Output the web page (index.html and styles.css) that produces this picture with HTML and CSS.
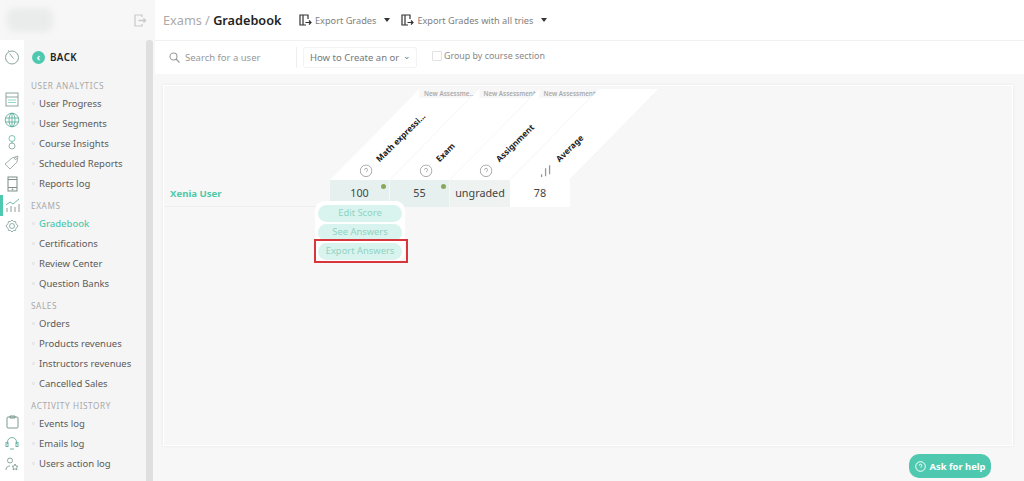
FILE: index.html
```html
<!DOCTYPE html>
<html lang="en">
<head>
  <meta charset="UTF-8">
  <meta name="viewport" content="width=device-width, initial-scale=1.0">
  <title>Gradebook</title>
  <link rel="stylesheet" href="styles.css">
</head>
<body>
  <aside class="side">
    <div class="side-top">
      <div class="logo"></div>
      <svg class="logout" width="13" height="13" viewBox="0 0 13 13" fill="none" stroke="#c9c9c9" stroke-width="1.2">
        <path d="M8 3V1H1v11h7v-2"/>
        <path d="M4.500 6.500h7M9.500 4.500l2 2-2 2" stroke-width="1.4"/>
      </svg>
    </div>
    <div class="side-body">
      <div class="rail">
        <svg class="rail-first" width="16" height="16" viewBox="0 0 16 16" fill="none" stroke="#7f9a92" stroke-width="0.9">
          <circle cx="8" cy="8.500" r="6.500"/><path d="M4 1.500l1.500 1M5.500 4.500l4 5"/>
        </svg>
        <svg class="rail-gap" width="14" height="15" viewBox="0 0 14 15" fill="none" stroke="#8fa6a0" stroke-width="1">
          <rect x="1" y="1" width="12" height="13"/><path d="M1 5h12"/><path d="M3 8h8M3 10.500h8" stroke="#8fd8c8"/>
        </svg>
        <svg width="16" height="16" viewBox="0 0 16 16" fill="none" stroke="#5fae9d" stroke-width="0.9">
          <circle cx="8" cy="8" r="6.800"/><ellipse cx="8" cy="8" rx="3" ry="6.800"/><path d="M1.500 6h13M1.500 10h13M8 1v14"/>
        </svg>
        <svg width="14" height="16" viewBox="0 0 14 16" fill="none" stroke="#6fbcab" stroke-width="0.9">
          <circle cx="7" cy="4.500" r="3"/><path d="M7 7.500v2"/><circle cx="7" cy="12" r="3" stroke="#8fa6a0"/>
        </svg>
        <svg width="16" height="15" viewBox="0 0 16 15" fill="none" stroke="#9aa8a4" stroke-width="0.9">
          <path d="M1 9l7-6 6-2-1 6-7 7z"/><circle cx="11.500" cy="3.500" r="1"/>
        </svg>
        <svg width="11" height="16" viewBox="0 0 11 16" fill="none" stroke="#7f8d89" stroke-width="1">
          <rect x="1" y="1" width="9" height="14"/><path d="M1 3.500h9M1 11.500h9"/><circle cx="5.500" cy="13.300" r="0.500"/>
        </svg>
        <div class="rail-active">
          <svg width="15" height="15" viewBox="0 0 15 15" fill="none" stroke="#8f9d99" stroke-width="1">
            <path d="M1 7l4-3 3 2 6-5" stroke="#6fbcab"/><path d="M2 14v-4M6 14V8M10 14V9M14 14V6"/>
          </svg>
        </div>
        <svg width="14" height="14" viewBox="0 0 14 14" fill="none" stroke="#86a8a0" stroke-width="0.9">
          <path d="M7 1l1.500 1.500h2l.5 2L13 7l-2 2.500-.5 2h-2L7 13l-1.500-1.500h-2l-.5-2L1 7l2-2.500.5-2h2z"/><circle cx="7" cy="7" r="2.500"/>
        </svg>
        <div class="rail-bottom">
          <svg width="13" height="14" viewBox="0 0 13 14" fill="none" stroke="#7f9a92" stroke-width="1">
            <rect x="1" y="2" width="11" height="11" rx="1"/><path d="M4 1h5v2H4z"/>
          </svg>
          <svg width="14" height="14" viewBox="0 0 14 14" fill="none" stroke="#6fb5a6" stroke-width="1">
            <path d="M2.500 8V6a4.500 4.500 0 0 1 9 0v2"/><rect x="1" y="6.500" width="2" height="4"/><rect x="11" y="6.500" width="2" height="4"/><path d="M5 13h4"/>
          </svg>
          <svg width="14" height="14" viewBox="0 0 14 14" fill="none" stroke="#7f9a92" stroke-width="0.9">
            <circle cx="5" cy="3.500" r="2.500"/><path d="M1 13c0-3 2-4 4-4"/><path d="M10 7l1 2 2 .3-1.500 1.400.4 2.100-1.900-1-1.900 1 .4-2.100L7 9.300 9 9z"/>
          </svg>
        </div>
      </div>
      <nav class="nav">
        <div class="back"><span class="back-dot">‹</span>BACK</div>
        <div class="nav-title">USER ANALYTICS</div>
        <a class="nav-item">User Progress</a>
        <a class="nav-item">User Segments</a>
        <a class="nav-item">Course Insights</a>
        <a class="nav-item">Scheduled Reports</a>
        <a class="nav-item">Reports log</a>
        <div class="nav-title">EXAMS</div>
        <a class="nav-item current">Gradebook</a>
        <a class="nav-item">Certifications</a>
        <a class="nav-item">Review Center</a>
        <a class="nav-item">Question Banks</a>
        <div class="nav-title">SALES</div>
        <a class="nav-item">Orders</a>
        <a class="nav-item">Products revenues</a>
        <a class="nav-item">Instructors revenues</a>
        <a class="nav-item">Cancelled Sales</a>
        <div class="nav-title">ACTIVITY HISTORY</div>
        <a class="nav-item">Events log</a>
        <a class="nav-item">Emails log</a>
        <a class="nav-item">Users action log</a>
      </nav>
      <div class="scrollbar"></div>
    </div>
  </aside>

  <main class="main">
    <header class="topbar">
      <h1 class="crumbs"><span class="crumb-dim">Exams / </span>Gradebook</h1>
      <div class="export">
        <svg width="13" height="12" viewBox="0 0 13 12" fill="none" stroke="#333" stroke-width="1.200"><path d="M9 5V1H1v10h6M4 1v10"/><path d="M6.500 8.500H12M10 6.500l2 2-2 2"/></svg>
        Export Grades<span class="caret"></span>
      </div>
      <div class="export">
        <svg width="13" height="12" viewBox="0 0 13 12" fill="none" stroke="#333" stroke-width="1.200"><path d="M9 5V1H1v10h6M4 1v10"/><path d="M6.500 8.500H12M10 6.500l2 2-2 2"/></svg>
        Export Grades with all tries<span class="caret"></span>
      </div>
    </header>

    <div class="filters">
      <div class="search">
        <svg width="11" height="11" viewBox="0 0 11 11" fill="none" stroke="#9a9a9a" stroke-width="1.100"><circle cx="4.500" cy="4.500" r="3.500"/><path d="M7 7l3.500 3.500"/></svg>
        Search for a user
      </div>
      <div class="course-select"><span class="course-name">How to Create an or</span><span class="chev">⌄</span></div>
      <label class="group-check"><span class="box"></span>Group by course section</label>
    </div>

    <section class="panel">
      <div class="grade-head">
        <div class="col-head"><span class="assess">New Assessme...</span><span class="col-title"><svg class="q" width="13" height="13" viewBox="0 0 13 13" fill="none" stroke="#aaa"><circle cx="6.500" cy="6.500" r="5.800"/><path d="M5 5.500a1.500 1.500 0 1 1 2 1.400v1"/></svg><b>Math expressi...</b></span></div>
        <div class="col-head"><span class="assess">New Assessment</span><span class="col-title"><svg class="q" width="13" height="13" viewBox="0 0 13 13" fill="none" stroke="#aaa"><circle cx="6.500" cy="6.500" r="5.800"/><path d="M5 5.500a1.500 1.500 0 1 1 2 1.400v1"/></svg><b>Exam</b></span></div>
        <div class="col-head"><span class="assess">New Assessment</span><span class="col-title"><svg class="q" width="13" height="13" viewBox="0 0 13 13" fill="none" stroke="#aaa"><circle cx="6.500" cy="6.500" r="5.800"/><path d="M5 5.500a1.500 1.500 0 1 1 2 1.400v1"/></svg><b>Assignment</b></span></div>
        <div class="col-head"><span class="col-title"><svg class="q" width="13" height="13" viewBox="0 0 13 13" fill="none" stroke="#999" stroke-width="1.300"><path d="M2 13v-3M6 12V4M10 10V1"/></svg><b>Average</b></span></div>
        <div class="col-head tail"></div>
      </div>
      <div class="grade-row">
        <div class="student">Xenia User</div>
        <div class="cell tinted">100<i class="dot"></i>
          <div class="menu">
            <span class="menu-btn">Edit Score</span>
            <span class="menu-btn">See Answers</span>
            <span class="menu-btn marked">Export Answers</span>
          </div>
        </div>
        <div class="cell tinted">55<i class="dot"></i></div>
        <div class="cell pale">ungraded</div>
        <div class="cell plain">78</div>
      </div>
    </section>

    <div class="help">
      <svg width="11" height="11" viewBox="0 0 11 11" fill="none" stroke="#fff"><circle cx="5.500" cy="5.500" r="4.800"/><path d="M4.200 4.500a1.300 1.300 0 1 1 1.800 1.200v1"/></svg>
      Ask for help
    </div>
  </main>
</body>
</html>
```

FILE: styles.css
```css
/* page */
html, body {
  height: 100%;
}

body {
  margin: 0;
  display: flex;
  height: 481px;
  overflow: hidden;
  font-family: 'Noto Sans', 'Liberation Sans', sans-serif;
  background-color: #f7f7f7;
  color: #555;
}

/* left side */
.side {
  width: 155px;
  flex-shrink: 0;
  display: flex;
  flex-direction: column;
  background-color: #f7f7f7;
}

.side-top {
  height: 40px;
  flex-shrink: 0;
  display: flex;
  align-items: center;
  justify-content: space-between;
  padding-right: 8px;
  box-sizing: border-box;
}

.logo {
  width: 46px;
  height: 24px;
  margin-left: 7px;
  background-color: #e9ecea;
  border-radius: 8px;
  filter: blur(3px);
}

.side-body {
  flex: 1;
  display: flex;
}

.rail {
  width: 24px;
  background-color: #fff;
  display: flex;
  flex-direction: column;
  align-items: center;
  flex-shrink: 0;
  position: relative;
  padding-top: 9px;
  box-sizing: border-box;
}

.rail svg {
  display: block;
  margin-bottom: 5.500px;
}

.rail .rail-gap {
  margin-top: 21px;
}

.rail-active {
  width: 24px;
  height: 21px;
  margin-top: -2px;
  margin-bottom: 3px;
  display: flex;
  justify-content: center;
  align-items: center;
  border-left: 3px solid #4ec9b0;
  box-sizing: border-box;
}

.rail-active svg {
  margin: 0 3px 0 0;
}

.rail-bottom {
  margin-top: auto;
  padding-bottom: 3px;
  display: flex;
  flex-direction: column;
  align-items: center;
}

.rail-bottom svg {
  margin-bottom: 7px;
}

.nav {
  width: 122px;
  flex-shrink: 0;
  background-color: #f5f5f5;
  padding: 8px 0 0 7px;
  box-sizing: border-box;
}

.back {
  display: flex;
  align-items: center;
  height: 18px;
  font-size: 9.800px;
  font-weight: 600;
  color: #222;
  letter-spacing: 0.4px;
  margin-bottom: 12px;
}

.back-dot {
  width: 13px;
  height: 13px;
  margin: 0 5px 0 1px;
  border-radius: 50%;
  background-color: #4ec9b0;
  color: #fff;
  font-size: 11px;
  line-height: 11px;
  text-align: center;
}

.nav-title {
  height: 16px;
  line-height: 16px;
  margin-top: 4px;
  font-size: 8.200px;
  color: #a8a8a8;
  letter-spacing: 0.6px;
}

.nav-item {
  display: block;
  height: 20px;
  line-height: 20px;
  font-size: 9.500px;
  color: #5a5a5a;
  padding-left: 8px;
  position: relative;
}

.nav-item::before {
  content: "";
  position: absolute;
  left: 1px;
  top: 8px;
  width: 3px;
  height: 3px;
  border: 1px solid #ddd;
  border-radius: 50%;
  box-sizing: border-box;
}

.nav-item.current {
  color: #4ec9b0;
  font-weight: 500;
}

.scrollbar {
  width: 7px;
  background-color: #dfdfdf;
  border-radius: 3px 3px 0 0;
  flex-shrink: 0;
}

/* main part */
.main {
  flex: 1;
  min-width: 0;
  position: relative;
}

.topbar {
  height: 41px;
  box-sizing: border-box;
  background-color: #fff;
  border-bottom: 1px solid #f0f0f0;
  display: flex;
  align-items: center;
  padding-left: 8px;
}

.crumbs {
  width: 118px;
  white-space: nowrap;
  margin: 0 18px 0 0;
  font-size: 12.700px;
  font-weight: 600;
  color: #222;
}

.crumb-dim {
  font-weight: 400;
  color: #aaa;
}

.export {
  display: flex;
  align-items: center;
  gap: 3px;
  font-size: 9.200px;
  color: #808080;
  margin-right: 11px;
}

.caret {
  width: 0;
  height: 0;
  margin-left: 5px;
  border-left: 3px solid transparent;
  border-right: 3px solid transparent;
  border-top: 4px solid #333;
}

.filters {
  height: 33px;
  box-sizing: border-box;
  background-color: #fff;
  display: flex;
  align-items: center;
  padding: 0 0 0 5px;
}

.search {
  width: 137px;
  height: 21px;
  box-sizing: border-box;
  padding-left: 9px;
  display: flex;
  align-items: center;
  gap: 5px;
  font-size: 9.500px;
  color: #999;
  border-right: 1px solid #eee;
  margin-right: 6px;
}

.course-select {
  width: 114px;
  height: 21px;
  box-sizing: border-box;
  padding-left: 6px;
  display: flex;
  align-items: center;
  font-size: 9.500px;
  color: #777;
  border: 1px solid #f3f3f3;
  border-radius: 3px;
}

.course-name {
  width: 93px;
  white-space: nowrap;
}

.chev {
  font-size: 9px;
  line-height: 9px;
  margin-top: -4px;
}

.group-check {
  display: flex;
  align-items: center;
  margin: -4px 0 0 15px;
  font-size: 8.900px;
  color: #888;
}

.box {
  width: 10px;
  height: 10px;
  margin-right: 2px;
  border: 1px solid #e2e2e2;
  border-radius: 1px;
  box-sizing: border-box;
}

.panel {
  width: 850px;
  height: 361px;
  margin: 11px 0 0 8px;
  box-sizing: border-box;
  background-color: #f7f7f7;
  border: 1px solid #fff;
  box-shadow: 0 0 2px #e5e5e5;
  padding-top: 3px;
}

/* slanted column heads */
.grade-head {
  display: flex;
  height: 91px;
  margin-left: 166px;
  overflow: visible;
}

.col-head {
  width: 60px;
  height: 91px;
  flex-shrink: 0;
  position: relative;
  background-color: #fff;
  transform: skewX(-44.500deg);
  transform-origin: bottom left;
  border-right: 1px solid #f3f3f3;
  box-sizing: border-box;
}

.col-head.tail {
  width: 0;
}

.assess {
  position: absolute;
  top: 0;
  left: 0;
  width: 60px;
  font-size: 6.300px;
  font-weight: 600;
  color: #aaa;
  text-align: center;
  white-space: nowrap;
  transform: skewX(44.500deg);
  transform-origin: top left;
  background-color: #f7f7f7;
  height: 9px;
  line-height: 9px;
}

.col-title {
  position: absolute;
  left: 36px;
  bottom: 0;
  display: flex;
  align-items: center;
  gap: 9px;
  white-space: nowrap;
  transform: skewX(44.500deg) rotate(-44.500deg);
  transform-origin: left bottom;
}

.col-title b {
  font-size: 8.300px;
  font-weight: 700;
  color: #222;
}

.q {
  transform: rotate(44.500deg);
  flex-shrink: 0;
}

.grade-row {
  display: flex;
  height: 27px;
}

.student {
  width: 166px;
  box-sizing: border-box;
  padding-left: 6px;
  line-height: 27px;
  font-size: 9.600px;
  font-weight: 700;
  color: #4ec9a8;
  border-bottom: 1px solid #efefef;
}

.cell {
  width: 60px;
  line-height: 26px;
  text-align: center;
  font-size: 10.800px;
  color: #444;
  position: relative;
  box-sizing: border-box;
}

.tinted {
  background-color: #e6f0ee;
  border-right: 1px solid #f6f6f6;
}

.pale {
  background-color: #eef3f2;
}

.plain {
  background-color: #fff;
}

.dot {
  position: absolute;
  top: 4px;
  right: 3px;
  width: 5px;
  height: 5px;
  border-radius: 50%;
  background-color: #8aa85c;
}

/* score menu under the cell */
.menu {
  position: absolute;
  top: 21px;
  left: -15px;
  width: 90px;
  box-sizing: border-box;
  padding: 4px 3px 0;
  background-color: #fff;
  border-radius: 9px;
  display: flex;
  flex-direction: column;
  gap: 2px;
  z-index: 2;
  height: 60px;
}

.menu-btn {
  height: 17px;
  line-height: 15px;
  background-color: #d9f3ee;
  border-radius: 9px;
  font-size: 9.400px;
  color: #8fd4c4;
  position: relative;
}

.menu-btn.marked::after {
  content: "";
  position: absolute;
  left: -4px;
  right: -6px;
  top: -4px;
  bottom: -3px;
  border: 2px solid #d6363c;
  box-sizing: border-box;
}

.help {
  position: absolute;
  left: 754px;
  top: 454px;
  width: 82px;
  height: 24px;
  border-radius: 10px;
  background-color: #4ec9b0;
  color: #fff;
  font-size: 9.400px;
  font-weight: 700;
  display: flex;
  align-items: center;
  justify-content: center;
  gap: 4px;
}
```
